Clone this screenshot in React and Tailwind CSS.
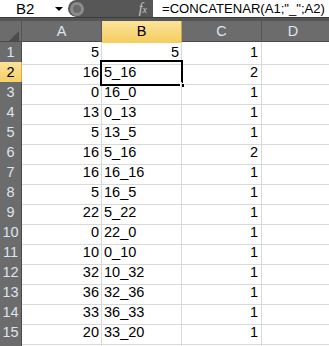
import React from 'react';

const colA = [5, 16, 0, 13, 5, 16, 16, 5, 22, 0, 10, 32, 36, 33, 20];
const colB = ['5', '5_16', '16_0', '0_13', '13_5', '5_16', '16_16', '16_5', '5_22', '22_0', '0_10', '10_32', '32_36', '36_33', '33_20'];
const colC = [1, 2, 1, 1, 1, 2, 1, 1, 1, 1, 1, 1, 1, 1, 1];

const font = { fontFamily: '"Liberation Sans", Arial, sans-serif' };

const App = () => {
  const rows = [...colA.map((a, i) => ({ n: i + 1, a, b: colB[i], c: colC[i] })), { n: 16, a: '', b: '', c: '' }];

  return (
    <div className="w-[329px] h-[346px] overflow-hidden bg-white text-[14.5px] text-black" style={font}>
      {/* Formula bar */}
      <div className="flex h-[17px] items-center bg-white">
        <div className="w-[68px] shrink-0 flex items-center h-full">
          <span className="ml-[16px] w-[39px] text-[15px] leading-none">B2</span>
          <span className="w-0 h-0 border-l-[4px] border-r-[4px] border-t-[4px] border-l-transparent border-r-transparent border-t-black" />
        </div>
        <div className="w-[85px] shrink-0 h-full flex items-center bg-[#575757] rounded-l-full">
          <div className="ml-[2px] w-[14px] h-[14px] rounded-full bg-[#8c8c8c] flex items-center justify-center">
            <div className="w-[8px] h-[8px] rounded-full bg-[#6a6a6a]" />
          </div>
          <span className="ml-auto mr-[6px] text-[#c8c8c8] italic text-[14px] leading-none" style={{ fontFamily: '"Liberation Serif", serif' }}>
            f<span className="text-[10px]">x</span>
          </span>
        </div>
        <div className="flex-1 min-w-0 pl-[9px] whitespace-nowrap leading-none text-[13.1px]">=CONCATENAR(A1;"_";A2)</div>
      </div>
      <div className="h-[4px] bg-[#555555] border-t border-[#3c3c3c]" />

      {/* Column headers */}
      <div className="grid grid-cols-[22px_80px_80px_80px_1fr] h-[21px] bg-[#6c6c6c] border-b border-[#4a4a4a] text-[#dde4ee]">
        <div className="border-r border-[#555] flex items-end justify-end p-[2px]">
          <svg width="10" height="10" viewBox="0 0 10 10">
            <polygon points="10,0 10,10 0,10" fill="#4c4c4c" />
          </svg>
        </div>
        <div className="border-r border-[#555] flex items-center justify-center">A</div>
        <div className="bg-gradient-to-b from-[#fbe39a] to-[#f5cd5d] border-r border-[#c9a44a] flex items-center justify-center text-black">B</div>
        <div className="border-r border-[#555] flex items-center justify-center">C</div>
        <div className="flex items-center justify-center pr-[5px]">D</div>
      </div>

      {/* Rows */}
      {rows.map((r) => {
        const sel = r.n === 2;
        return (
          <div key={r.n} className="grid grid-cols-[22px_80px_80px_80px_1fr] h-[20px]">
            <div className={sel
              ? 'bg-gradient-to-b from-[#fbe39a] to-[#f5cd5d] border-r border-r-[#e8a53a] border-b border-b-[#c9a44a] flex items-center justify-center text-black'
              : 'bg-[#6c6c6c] border-r border-[#4a4a4a] border-b border-b-[#5a5a5a] flex items-center justify-center text-[#dde4ee]'}>
              {r.n < 16 ? r.n : ''}
            </div>
            <div className="border-r border-b border-[#d9d9d9] flex items-center justify-end pr-[2px]">{r.a}</div>
            <div className={`border-r border-b border-[#d9d9d9] flex items-center relative ${r.n === 1 ? 'justify-end pr-[2px]' : 'pl-[2px]'}`}>
              {r.b}
              {sel && (
                <>
                  <div className="absolute left-[-2px] top-[-2px] right-[-2px] bottom-[-2px] border-2 border-black" />
                  <div className="absolute right-[-4px] bottom-[-4px] w-[5px] h-[5px] bg-black border border-white" />
                </>
              )}
            </div>
            <div className="border-r border-b border-[#d9d9d9] flex items-center justify-end pr-[3px]">{r.c}</div>
            <div className="border-b border-[#d9d9d9]" />
          </div>
        );
      })}
    </div>
  );
};

export default App;
